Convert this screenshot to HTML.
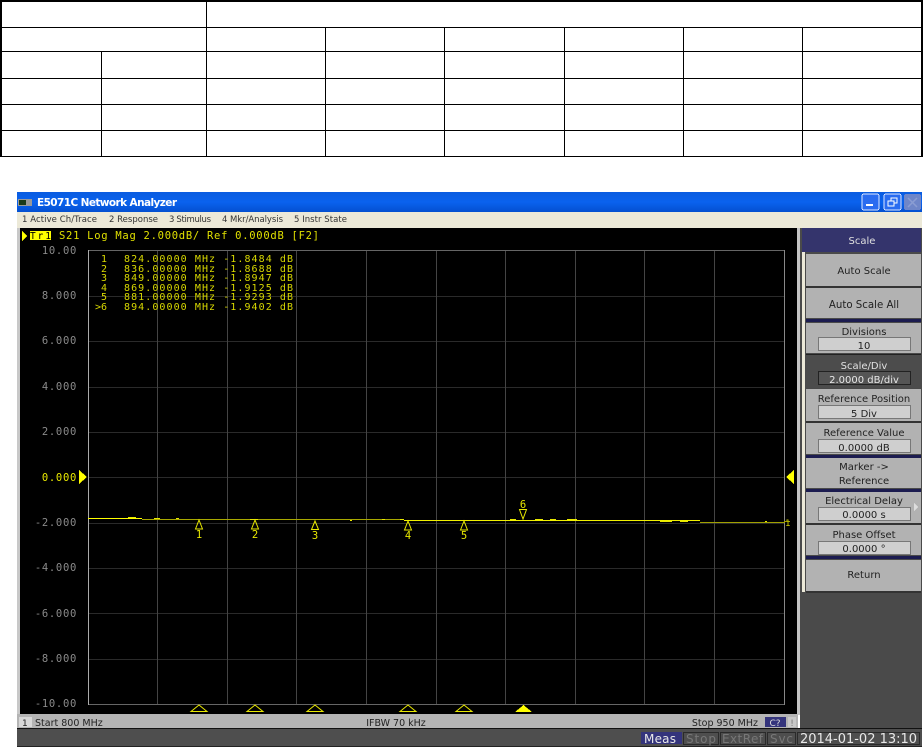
<!DOCTYPE html>
<html><head><meta charset="utf-8">
<style>
html,body{margin:0;padding:0;background:#fff;width:923px;height:747px;overflow:hidden}
svg{display:block}
text{font-family:"DejaVu Sans","Liberation Sans",sans-serif;font-size:9px}
.m{font-family:"DejaVu Sans Mono","Liberation Mono",monospace}
.c{text-anchor:middle}
.e{text-anchor:end}
.y{font-size:10.5px;letter-spacing:.7px}
.t{font-size:10px}
</style></head><body>
<svg width="923" height="747" viewBox="0 0 923 747" xmlns="http://www.w3.org/2000/svg" shape-rendering="crispEdges">
<!-- table -->
<g fill="#000">
<rect x="0" y="0" width="923" height="2"/>
<rect x="0" y="0" width="2" height="157"/>
<rect x="921" y="0" width="2" height="157"/>
<rect x="0" y="27" width="923" height="1"/>
<rect x="0" y="51" width="923" height="1"/>
<rect x="0" y="78" width="923" height="1"/>
<rect x="0" y="104" width="923" height="1"/>
<rect x="0" y="130" width="923" height="1"/>
<rect x="0" y="156" width="923" height="1"/>
<rect x="206" y="0" width="1" height="157"/>
<rect x="101" y="51" width="1" height="106"/>
<rect x="325" y="27" width="1" height="130"/>
<rect x="444" y="27" width="1" height="130"/>
<rect x="564" y="27" width="1" height="130"/>
<rect x="683" y="27" width="1" height="130"/>
<rect x="802" y="27" width="1" height="130"/>
</g>
<!-- window -->
<defs><linearGradient id="tb" x1="0" y1="0" x2="0" y2="1"><stop offset="0" stop-color="#0a5ce0"/><stop offset=".5" stop-color="#0a62ee"/><stop offset="1" stop-color="#0450d0"/></linearGradient></defs>
<rect x="17" y="192" width="905" height="20" fill="url(#tb)"/>
<rect x="17" y="212" width="905" height="16" fill="#ece9d8"/>
<rect x="18" y="199" width="14" height="7" fill="#999"/><rect x="19" y="200" width="7" height="5" fill="#1a3a1a"/>
<text x="37" y="206" fill="#fff" font-weight="bold" style="font-size:10.5px" textLength="140" shape-rendering="auto">E5071C Network Analyzer</text>
<g>
<rect x="862" y="194" width="17" height="16" rx="2" fill="#2a6cf0" stroke="#dfe8ff"/><rect x="866" y="204" width="7" height="2" fill="#fff"/>
<rect x="884" y="194" width="17" height="16" rx="2" fill="#2a6cf0" stroke="#dfe8ff"/><rect x="891" y="198" width="6" height="5" fill="none" stroke="#fff"/><rect x="888" y="201" width="6" height="5" fill="#2a6cf0" stroke="#fff"/>
<rect x="904" y="194" width="17" height="16" rx="2" fill="#6f86c8"/><path d="M908 198l9 9M917 198l-9 9" stroke="#8b9dd2" stroke-width="1.5" shape-rendering="auto"/>
</g>
<g fill="#333" shape-rendering="auto">
<text x="22" y="222" textLength="75" style="font-size:8.5px">1 Active Ch/Trace</text>
<text x="109" y="222" textLength="49" style="font-size:8.5px">2 Response</text>
<text x="169" y="222" textLength="42" style="font-size:8.5px">3 Stimulus</text>
<text x="222" y="222" textLength="61" style="font-size:8.5px">4 Mkr/Analysis</text>
<text x="294" y="222" textLength="53" style="font-size:8.5px">5 Instr State</text>
</g>
<!-- main panels -->
<rect x="17" y="228" width="3" height="487" fill="#c8c8c8"/>
<rect x="20" y="228" width="777" height="487" fill="#000"/>
<rect x="797" y="228" width="3" height="487" fill="#c4c4c4"/>
<rect x="800" y="228" width="122" height="501" fill="#4a4a4a"/>
<!-- grid -->
<g fill="#2a2a2a">
<rect x="88" y="296" width="696" height="1"/><rect x="88" y="341" width="696" height="1"/><rect x="88" y="387" width="696" height="1"/><rect x="88" y="432" width="696" height="1"/><rect x="88" y="477" width="696" height="1"/><rect x="88" y="523" width="696" height="1"/><rect x="88" y="568" width="696" height="1"/><rect x="88" y="613" width="696" height="1"/><rect x="88" y="659" width="696" height="1"/>
</g>
<g fill="#444">
<rect x="157" y="251" width="1" height="453"/><rect x="227" y="251" width="1" height="453"/><rect x="296" y="251" width="1" height="453"/><rect x="366" y="251" width="1" height="453"/><rect x="436" y="251" width="1" height="453"/><rect x="505" y="251" width="1" height="453"/><rect x="575" y="251" width="1" height="453"/><rect x="644" y="251" width="1" height="453"/><rect x="714" y="251" width="1" height="453"/>
</g>
<rect x="88" y="250" width="697" height="1" fill="#666"/>
<rect x="88" y="704" width="697" height="1" fill="#666"/>
<rect x="88" y="250" width="1" height="455" fill="#aaa"/>
<rect x="784" y="250" width="1" height="455" fill="#888"/>
<!-- header -->
<path d="M22 231l5 5-5 5z" fill="#ff0"/>
<rect x="30" y="231" width="21" height="9" fill="#ff0"/>
<g shape-rendering="auto" fill="#e0e000">
<text class="m" x="30" y="239" fill="#000" style="font-size:9.500px" textLength="21">Tr1</text>
<text class="m" x="59" y="239" style="font-size:10.5px" textLength="260" xml:space="preserve">S21 Log Mag 2.000dB/ Ref 0.000dB [F2]</text>
</g>
<!-- y labels -->
<g shape-rendering="auto" fill="#8a8a8a">
<text class="m e y" x="77" y="254">10.00</text>
<text class="m e y" x="77" y="299">8.000</text>
<text class="m e y" x="77" y="344">6.000</text>
<text class="m e y" x="77" y="390">4.000</text>
<text class="m e y" x="77" y="435">2.000</text>
<text class="m e y" x="77" y="481" fill="#e8e800">0.000</text>
<text class="m e y" x="77" y="526">-2.000</text>
<text class="m e y" x="77" y="571">-4.000</text>
<text class="m e y" x="77" y="617">-6.000</text>
<text class="m e y" x="77" y="662">-8.000</text>
<text class="m e y" x="77" y="707">-10.00</text>
</g>
<path d="M79 470l8 7-8 7z" fill="#ff0"/>
<path d="M794 470l-8 7 8 7z" fill="#ff0"/>
<!-- marker table -->
<g shape-rendering="auto" fill="#d8d800">
<text class="m e t" x="107" y="262">1</text><text class="m t" x="124" y="262" textLength="169" xml:space="preserve">824.00000 MHz -1.8484 dB</text>
<text class="m e t" x="107" y="272">2</text><text class="m t" x="124" y="272" textLength="169" xml:space="preserve">836.00000 MHz -1.8688 dB</text>
<text class="m e t" x="107" y="281">3</text><text class="m t" x="124" y="281" textLength="169" xml:space="preserve">849.00000 MHz -1.8947 dB</text>
<text class="m e t" x="107" y="291">4</text><text class="m t" x="124" y="291" textLength="169" xml:space="preserve">869.00000 MHz -1.9125 dB</text>
<text class="m e t" x="107" y="300">5</text><text class="m t" x="124" y="300" textLength="169" xml:space="preserve">881.00000 MHz -1.9293 dB</text>
<text class="m e t" x="107" y="310">&gt;6</text><text class="m t" x="124" y="310" textLength="169" xml:space="preserve">894.00000 MHz -1.9402 dB</text>
</g>
<!-- trace -->
<rect x="88" y="518" width="54" height="1" fill="#ff0"/>
<rect x="142" y="519" width="262" height="1" fill="#a8a800"/>
<rect x="404" y="520" width="296" height="1" fill="#f0f000"/>
<rect x="700" y="522" width="85" height="1" fill="#a0a000"/>
<g fill="#e8e800">
<rect x="128" y="517" width="8" height="1"/><rect x="154" y="518" width="6" height="1"/><rect x="176" y="518" width="3" height="1"/><rect x="250" y="519" width="8" height="1"/><rect x="350" y="520" width="2" height="1"/><rect x="382" y="519" width="3" height="1"/><rect x="400" y="519" width="4" height="1"/><rect x="510" y="519" width="6" height="1"/><rect x="535" y="519" width="8" height="1"/><rect x="550" y="519" width="6" height="1"/><rect x="567" y="519" width="10" height="1"/><rect x="660" y="521" width="12" height="1"/><rect x="680" y="521" width="8" height="1"/><rect x="765" y="521" width="2" height="1"/>
</g>
<path d="M784 521.500h6" stroke="#a0a000" fill="none"/>
<text class="m" x="785" y="526" fill="#c8c800" style="font-size:9px" shape-rendering="auto">1</text>
<!-- markers on trace -->
<g fill="none" stroke="#e8e800" shape-rendering="auto">
<path d="M199 520l-3.500 9h7z"/><path d="M255 520l-3.500 9h7z"/><path d="M315 521l-3.500 8.500h7z"/><path d="M408 521l-3.500 9h7z"/><path d="M464 521l-3.500 9h7z"/><path d="M523 519l-3.500-9.500h7z"/>
</g>
<g shape-rendering="auto" fill="#e8e800">
<text class="m c" x="199" y="538" style="font-size:10.5px">1</text>
<text class="m c" x="255" y="538" style="font-size:10.5px">2</text>
<text class="m c" x="315" y="539" style="font-size:10.5px">3</text>
<text class="m c" x="408" y="539" style="font-size:10.5px">4</text>
<text class="m c" x="464" y="539" style="font-size:10.5px">5</text>
<text class="m c" x="523" y="508" style="font-size:10.5px">6</text>
</g>
<!-- bottom triangles -->
<g fill="none" stroke="#e8e800" shape-rendering="auto">
<path d="M191 711.500h16l-8-6.500z"/><path d="M247 711.500h16l-8-6.500z"/><path d="M307 711.500h16l-8-6.500z"/><path d="M400 711.500h16l-8-6.500z"/><path d="M456 711.500h16l-8-6.500z"/>
</g>
<path d="M515 712h17l-8.500-7z" fill="#ff0"/>
<!-- softkeys -->
<rect x="802" y="228" width="119" height="24" fill="#34346c"/>
<rect x="802" y="252" width="3" height="340" fill="#ece9d8"/>
<rect x="806" y="319" width="115" height="3" fill="#1c1c50"/>
<g fill="#b2b2b2">
<rect x="806" y="254" width="115" height="32"/>
<rect x="806" y="288" width="115" height="30"/>
<rect x="806" y="323" width="115" height="30"/>
<rect x="806" y="389" width="115" height="32"/>
<rect x="806" y="423" width="115" height="31"/>
<rect x="806" y="458" width="115" height="30"/>
<rect x="806" y="492" width="115" height="31"/>
<rect x="806" y="525" width="115" height="30"/>
<rect x="806" y="560" width="115" height="31"/>
</g>
<rect x="806" y="355" width="115" height="33" fill="#4c4c4c"/>
<rect x="806" y="354" width="115" height="1" fill="#222"/>
<g fill="#1c1c50"><rect x="806" y="455" width="115" height="3"/><rect x="806" y="489" width="115" height="3"/><rect x="806" y="556" width="115" height="3"/></g>
<g fill="#333">
<rect x="806" y="286" width="115" height="2"/><rect x="806" y="421" width="115" height="2"/><rect x="806" y="523" width="115" height="2"/><rect x="806" y="591" width="115" height="2"/>
</g>
<g fill="#cfcfcf" stroke="#777">
<rect x="818.500" y="337.500" width="92" height="13"/>
<rect x="818.500" y="405.500" width="92" height="13"/>
<rect x="818.500" y="439.500" width="92" height="13"/>
<rect x="818.500" y="507.500" width="92" height="13"/>
<rect x="818.500" y="541.500" width="92" height="13"/>
</g>
<rect x="818.500" y="371.500" width="92" height="13" fill="#555" stroke="#222"/>
<path d="M914 503l4 4-4 4z" fill="#ddd"/>
<g shape-rendering="auto" fill="#222">
<text class="c" x="862" y="244" fill="#e0e0e0" style="font-size:10px">Scale</text>
<text class="c" x="864" y="274" style="font-size:10px">Auto Scale</text>
<text class="c" x="864" y="308" style="font-size:10.2px">Auto Scale All</text>
<text class="c" x="864" y="335" style="font-size:10px">Divisions</text>
<text class="c" x="864" y="349" style="font-size:10px">10</text>
<text class="c" x="864" y="369" fill="#e0e0e0" style="font-size:10px">Scale/Div</text>
<text class="c" x="864" y="383" fill="#e8e8e8" style="font-size:10px">2.0000 dB/div</text>
<text class="c" x="864" y="402" style="font-size:10px">Reference Position</text>
<text class="c" x="864" y="417" style="font-size:10px">5 Div</text>
<text class="c" x="864" y="436" style="font-size:10px">Reference Value</text>
<text class="c" x="864" y="451" style="font-size:10px">0.0000 dB</text>
<text class="c" x="864" y="470" style="font-size:10px">Marker -&gt;</text>
<text class="c" x="864" y="484" style="font-size:10px">Reference</text>
<text class="c" x="864" y="504" style="font-size:10px">Electrical Delay</text>
<text class="c" x="864" y="518" style="font-size:10px">0.0000 s</text>
<text class="c" x="864" y="538" style="font-size:10px">Phase Offset</text>
<text class="c" x="864" y="552" style="font-size:10px">0.0000 °</text>
<text class="c" x="864" y="578" style="font-size:10px">Return</text>
</g>
<!-- status bar -->
<rect x="17" y="714" width="781" height="14" fill="#b4b4b4"/>
<rect x="19" y="717" width="13" height="10" fill="#d8d8d8"/>
<rect x="17" y="728" width="905" height="1" fill="#111"/>
<rect x="17" y="729" width="905" height="17" fill="#4e4e4e"/>
<rect x="17" y="746" width="905" height="1" fill="#222"/>
<rect x="765" y="717" width="21" height="10" fill="#34347c"/>
<rect x="788" y="717" width="8" height="10" fill="#c8c8c8"/>
<g shape-rendering="auto" fill="#222">
<text x="22" y="726">1</text>
<text x="35" y="726" style="font-size:9.500px">Start 800 MHz</text>
<text class="c" x="396" y="726" style="font-size:9.500px">IFBW 70 kHz</text>
<text class="e" x="758" y="726" style="font-size:9.500px">Stop 950 MHz</text>
<text class="c" x="775" y="726" fill="#ddd">C?</text>
<text class="c" x="792" y="726" fill="#777">!</text>
</g>
<!-- bottom status -->
<rect x="641" y="732" width="41" height="12" fill="#34347c"/>
<g fill="none" stroke="#2a2a2a"><rect x="683.500" y="732.500" width="35" height="12"/><rect x="720.500" y="732.500" width="45" height="12"/><rect x="767.500" y="732.500" width="28" height="12"/><rect x="797.500" y="732.500" width="122" height="12"/></g>
<g shape-rendering="auto">
<text x="644" y="743" fill="#e8e8e8" style="font-size:12px" textLength="32">Meas</text>
<text x="686" y="743" fill="#777" style="font-size:12px" textLength="30">Stop</text>
<text x="722" y="743" fill="#777" style="font-size:12px" textLength="41">ExtRef</text>
<text x="770" y="743" fill="#777" style="font-size:12px" textLength="23">Svc</text>
<text x="800" y="743" fill="#e8e8e8" style="font-size:13px" textLength="117">2014-01-02 13:10</text>
</g>
</svg>
</body></html>
